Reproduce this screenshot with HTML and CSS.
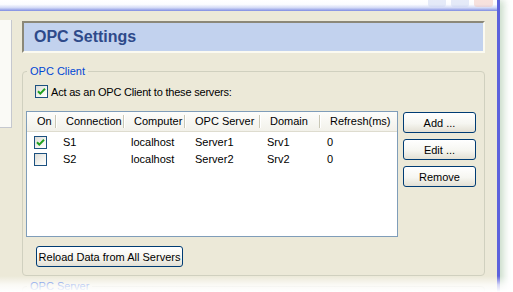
FILE: index.html
```html
<!DOCTYPE html>
<html lang="en">
<head>
    <meta charset="UTF-8">
    <title>OPC Settings</title>
    <link rel="stylesheet" href="styles.css">
</head>
<body>
    <div class="window">
        <div class="titlebar">
            <span class="ctl"></span>
            <span class="ctl"></span>
            <span class="ctl close"></span>
        </div>
        <div class="client">
            <div class="side-panel"></div>
            <div class="main">
                <div class="page-title">OPC Settings</div>

                <fieldset class="group">
                    <legend>OPC Client</legend>
                    <label class="check-row">
                        <span class="xp-check checked">
                            <svg viewBox="0 0 11 11" width="11" height="11"><path d="M2 5.2 L4.3 7.6 L9 2.8" fill="none" stroke="#21a121" stroke-width="2"/></svg>
                        </span>
                        <span class="check-label">Act as an OPC Client to these servers:</span>
                    </label>

                    <div class="list-row">
                        <div class="listview">
                            <div class="lv-head">
                                <div class="col first">On</div>
                                <div class="col">Connection</div>
                                <div class="col">Computer</div>
                                <div class="col">OPC Server</div>
                                <div class="col">Domain</div>
                                <div class="col last">Refresh(ms)</div>
                            </div>
                            <div class="lv-body">
                                <div class="lv-row">
                                    <div class="cell on">
                                        <span class="xp-check checked">
                                            <svg viewBox="0 0 11 11" width="11" height="11"><path d="M2 5.2 L4.3 7.6 L9 2.8" fill="none" stroke="#21a121" stroke-width="2"/></svg>
                                        </span>
                                    </div>
                                    <div class="cell">S1</div>
                                    <div class="cell">localhost</div>
                                    <div class="cell srv">Server1</div>
                                    <div class="cell">Srv1</div>
                                    <div class="cell">0</div>
                                </div>
                                <div class="lv-row">
                                    <div class="cell on"><span class="xp-check"></span></div>
                                    <div class="cell">S2</div>
                                    <div class="cell">localhost</div>
                                    <div class="cell srv">Server2</div>
                                    <div class="cell">Srv2</div>
                                    <div class="cell">0</div>
                                </div>
                            </div>
                        </div>
                        <div class="side-buttons">
                            <button class="xp-btn">Add ...</button>
                            <button class="xp-btn">Edit ...</button>
                            <button class="xp-btn">Remove</button>
                        </div>
                    </div>

                    <button class="xp-btn reload">Reload Data from All Servers</button>
                </fieldset>

                <fieldset class="group next">
                    <legend>OPC Server</legend>
                </fieldset>
            </div>
        </div>
    </div>
    <div class="fade-bottom"></div>
</body>
</html>
```

FILE: styles.css
```css
body {
    margin: 0;
    width: 513px;
    height: 292px;
    overflow: hidden;
    position: relative;
    background: #fff;
    font-family: "Liberation Sans", Arial, sans-serif;
    font-size: 11px;
    color: #000;
}
.window {
    box-sizing: border-box;
    width: 500px;
    height: 292px;
    overflow: hidden;
    background: #ece9d8;
    border-right: 3px solid #5d62dc;
    box-shadow: 4px 0 7px rgba(110, 160, 110, 0.35);
}
.titlebar {
    height: 11px;
    display: flex;
    justify-content: flex-end;
    gap: 5px;
    padding-right: 4px;
    background: linear-gradient(to bottom, #fff 0%, #fbfcff 40%, #d3daf6 70%, #7f8ce2 100%);
}
.ctl {
    width: 18px;
    height: 7px;
    border-radius: 0 0 3px 3px;
    background: rgba(200, 210, 240, 0.45);
}
.ctl.close {
    width: 19px;
    background: rgba(240, 190, 180, 0.45);
}
.client {
    display: flex;
    padding-top: 9px;
}
.side-panel {
    width: 11px;
    height: 107px;
    background: #fafaf6;
    border-right: 1px solid #c5c8cf;
    border-bottom: 1px solid #c5c8cf;
}
.main {
    margin-left: 10px;
    width: 463px;
    margin-top: 1px;
}
.page-title {
    height: 28px;
    line-height: 28px;
    padding-left: 10px;
    background: #c2d2ee;
    border-top: 2px solid #8b8878;
    border-left: 2px solid #8b8878;
    border-bottom: 2px solid #fbfaf1;
    border-right: 2px solid #fbfaf1;
    color: #2e4a8a;
    font-size: 16px;
    font-weight: bold;
}
.group {
    box-sizing: border-box;
    margin: 12px 0 0 0;
    padding: 0 3px 0 3px;
    height: 211px;
    border: 1px solid #d0d0bf;
    border-radius: 4px;
}
.group legend {
    margin-left: 1px;
    padding: 0 3px;
    color: #0046d5;
    line-height: 13px;
}
.group.next {
    margin-top: 4px;
    height: 14px;
}
.check-row {
    display: flex;
    align-items: center;
    gap: 3px;
    margin: 7px 0 0 9px;
    height: 13px;
}
.check-label {
    letter-spacing: -0.2px;
}
.xp-check {
    box-sizing: border-box;
    width: 13px;
    height: 13px;
    display: flex;
    align-items: center;
    justify-content: center;
    border: 1px solid #1c5180;
    background: linear-gradient(135deg, #dcdcd7 0%, #f4f4f0 60%, #fff 100%);
}
.list-row {
    display: flex;
    margin-top: 13px;
}
.listview {
    box-sizing: border-box;
    width: 372px;
    height: 126px;
    border: 1px solid #7f9db9;
    background: #fff;
}
.lv-head,
.lv-row {
    display: grid;
    grid-template-columns: 30px 68px 61px 75px 60px 1fr;
}
.lv-head {
    height: 19px;
    background: linear-gradient(to bottom, #fdfdfb, #f2f1ea);
    border-bottom: 1px solid #dedccf;
}
.col {
    line-height: 19px;
    padding-left: 9px;
    color: #000;
    background: linear-gradient(#c9c7b6, #c9c7b6) no-repeat right 1px center / 1px 13px,
                linear-gradient(#fff, #fff) no-repeat right center / 1px 13px;
}
.col.first {
    padding-left: 10px;
}
.col.last {
    background: none;
}
.lv-body {
    padding-top: 2px;
}
.lv-row {
    height: 17px;
    align-items: center;
}
.cell {
    padding-left: 6px;
    line-height: 17px;
}
.cell.on {
    padding-left: 7px;
    display: flex;
}
.cell.srv {
    padding-left: 9px;
}
.side-buttons {
    display: flex;
    flex-direction: column;
    gap: 6px;
    margin-left: 5px;
    padding-top: 1px;
}
.xp-btn {
    box-sizing: border-box;
    width: 73px;
    height: 21px;
    padding: 0;
    border: 1px solid #003c74;
    border-radius: 3px;
    background: linear-gradient(to bottom, #ffffff 0%, #f6f6f1 55%, #e3e0d4 100%);
    font-family: "Liberation Sans", Arial, sans-serif;
    font-size: 11px;
    color: #000;
}
.xp-btn.reload {
    display: block;
    width: 147px;
    margin: 9px 0 0 10px;
}
.fade-bottom {
    position: absolute;
    left: 0;
    right: 0;
    bottom: 0;
    height: 16px;
    background: linear-gradient(to bottom, rgba(255, 255, 255, 0), rgba(255, 255, 255, 0.75) 55%, #fff);
    pointer-events: none;
}
```
